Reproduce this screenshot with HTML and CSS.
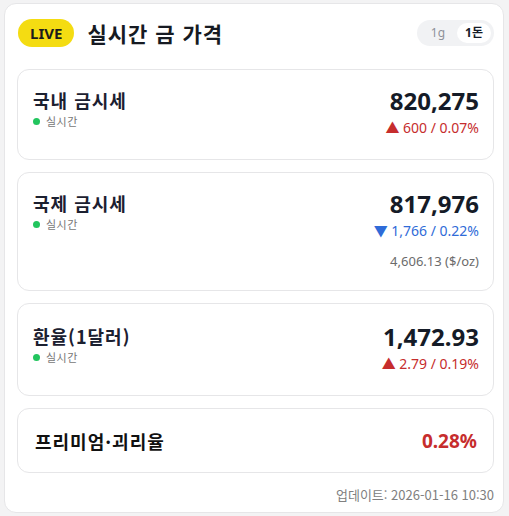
FILE: index.html
```html
<!DOCTYPE html>
<html lang="ko">
  <head>
    <meta charset="UTF-8" />
    <meta name="viewport" content="width=device-width, initial-scale=1.0" />
    <title>실시간 금 가격</title>
    <link rel="stylesheet" href="styles.css">
  </head>
  <body>
    <div class="panel">
      <!-- 헤더 -->
      <div class="head">
        <span class="live">LIVE</span>
        <h1 class="title">실시간 금 가격</h1>
        <div class="unit">
          <span class="unit-btn">1g</span>
          <span class="unit-btn on">1돈</span>
        </div>
      </div>

      <!-- 국내 금시세 -->
      <div class="item">
        <div class="left">
          <div class="name">국내 금시세</div>
          <div class="tag"><i class="dot"></i>실시간</div>
        </div>
        <div class="right">
          <div class="price">820,275</div>
          <div class="diff up">▲ 600 / 0.07%</div>
        </div>
      </div>

      <!-- 국제 금시세 -->
      <div class="item">
        <div class="left">
          <div class="name">국제 금시세</div>
          <div class="tag"><i class="dot"></i>실시간</div>
        </div>
        <div class="right">
          <div class="price">817,976</div>
          <div class="diff down">▼ 1,766 / 0.22%</div>
          <div class="sub">4,606.13 ($/oz)</div>
        </div>
      </div>

      <!-- 환율 -->
      <div class="item fx">
        <div class="left">
          <div class="name">환율(1달러)</div>
          <div class="tag"><i class="dot"></i>실시간</div>
        </div>
        <div class="right">
          <div class="price">1,472.93</div>
          <div class="diff up">▲ 2.79 / 0.19%</div>
        </div>
      </div>

      <!-- 프리미엄 -->
      <div class="item flat">
        <div class="name sm">프리미엄·괴리율</div>
        <div class="rate">0.28%</div>
      </div>

      <div class="updated">업데이트: 2026-01-16 10:30</div>
    </div>
  </body>
</html>
```

FILE: styles.css
```css
* {
  margin: 0;
  padding: 0;
  box-sizing: border-box;
}

body {
  background-color: #f3f3f4;
  padding: 3px 5px 3px 4px;
  font-family: "Noto Sans", "Noto Sans CJK KR", sans-serif;
  color: #151b27;
}

.panel {
  background-color: #fff;
  border: 1px solid #e6e6e8;
  border-radius: 12px;
  padding: 15px 9px 14px 12px;
  height: 510px;
}

/* 헤더 */
.head {
  display: flex;
  align-items: center;
  height: 28px;
  margin-bottom: 22px;
  padding-left: 1px;
}
.live {
  display: inline-block;
  background-color: #f4dc12;
  color: #1b1b1b;
  font-size: 15px;
  font-weight: 700;
  line-height: 28px;
  padding: 0 12px;
  border-radius: 14px;
}
.title {
  font-family: "Noto Sans CJK KR", sans-serif;
  font-size: 21px;
  font-weight: 700;
  letter-spacing: 1px;
  margin-left: 13px;
  flex: 1;
  color: #161a22;
}
.unit {
  display: flex;
  background-color: #f1f2f4;
  border-radius: 13px;
  padding: 3px;
  height: 26px;
}
.unit-btn {
  font-size: 12px;
  line-height: 20px;
  padding: 0 12px 0 11px;
  color: #8d9199;
  border-radius: 10px;
}
.unit-btn.on {
  background-color: #fff;
  color: #151b27;
  font-weight: 700;
  padding: 0 8px;
}

/* 카드 */
.item {
  display: flex;
  justify-content: space-between;
  border: 1px solid #e6e6e8;
  border-radius: 12px;
  padding: 16px 14px 20px 15px;
  margin-bottom: 12px;
  min-height: 91px;
}
.item.fx {
  padding-top: 18px;
  min-height: 93px;
}
.name {
  font-family: "Noto Sans CJK KR", sans-serif;
  font-size: 18px;
  font-weight: 700;
  letter-spacing: 1px;
  line-height: 24px;
  margin-top: 2px;
  color: #1b2030;
}
.tag {
  display: flex;
  align-items: center;
  font-family: "Noto Sans CJK KR", sans-serif;
  font-size: 11px;
  letter-spacing: 0.5px;
  color: #777;
  margin-top: 1px;
}
.dot {
  display: inline-block;
  width: 7px;
  height: 7px;
  border-radius: 50%;
  background-color: #22c55e;
  margin-right: 6px;
}
.right {
  text-align: right;
}
.price {
  font-size: 24px;
  font-weight: 700;
  line-height: 30px;
}
.diff {
  font-size: 14px;
  line-height: 20px;
  margin-top: 2px;
}
.up {
  color: #c62d2d;
}
.down {
  color: #2f6bd8;
}
.sub {
  font-size: 13px;
  line-height: 18px;
  color: #6b6b6b;
  margin-top: 11px;
}

.item.flat {
  align-items: center;
  min-height: 65px;
  padding: 0 16px 0 17px;
}
.name.sm {
  font-size: 18px;
  color: #111;
  margin-top: 0;
}
.rate {
  font-size: 19px;
  font-weight: 700;
  color: #c62d2d;
}

.updated {
  text-align: right;
  font-family: "Noto Sans CJK KR", sans-serif;
  font-size: 13px;
  color: #808080;
  margin-top: 3px;
}
```
